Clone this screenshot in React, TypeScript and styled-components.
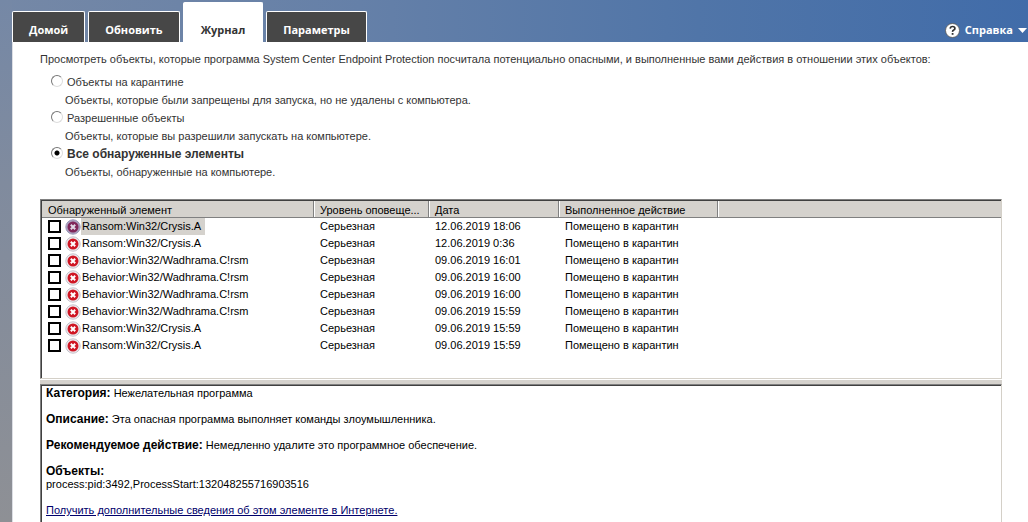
import React, { useState } from 'react';
import styled, { createGlobalStyle } from 'styled-components';

const GlobalStyle = createGlobalStyle`
  * { box-sizing: border-box; }
  html, body, #root { height: 100%; }
  body {
    margin: 0;
    overflow: hidden;
    font-family: 'Liberation Sans', Arial, sans-serif;
    font-size: 11px;
    line-height: 13px;
    color: #000;
  }
`;

const Window = styled.div`
  display: flex;
  flex-direction: column;
  height: 100%;
  padding-left: 12px;
  background:
    linear-gradient(180deg, #7588a6 0, #808b9e 35%, #8e9095 100%) 0 0 / 12px 100% no-repeat,
    linear-gradient(90deg, #7588a6 0, #6580a8 35%, #5075a8 68%, #416ca9 100%);
`;

const Header = styled.header`
  display: flex;
  align-items: flex-end;
  justify-content: space-between;
  flex: none;
  height: 42px;
`;

const Tabs = styled.nav`
  display: flex;
  align-items: flex-end;
  gap: 3px;
`;

const Tab = styled.button<{ $active?: boolean }>`
  height: ${p => (p.$active ? 40 : 31)}px;
  padding: ${p => (p.$active ? '15px 17px 0' : '6px 16px 0')};
  border: 1px solid #fff;
  border-bottom: 0;
  border-radius: 2px 2px 0 0;
  background: ${p => (p.$active ? '#fff' : '#474747')};
  color: ${p => (p.$active ? '#333' : '#fff')};
  font: bold 11px/14px 'Open Sans', sans-serif;
`;

const HelpButton = styled.button`
  display: flex;
  align-items: center;
  gap: 5px;
  height: 24px;
  padding: 0 1px 0 0;
  border: 0;
  background: none;
  color: #fff;
  font: bold 11px/14px 'Open Sans', sans-serif;
`;

const Page = styled.main`
  display: flex;
  flex-direction: column;
  flex: 1;
  min-height: 0;
  padding: 11px 26px 0 27px;
  border-left: 1px solid #dcdee4;
  background: #fff;
`;

const Intro = styled.p`
  margin: 0 0 9px;
  color: #333;
  white-space: nowrap;
`;

const Filters = styled.fieldset`
  margin: 0 0 16px;
  padding: 0 0 0 11px;
  border: 0;
  color: #333;
  line-height: 15px;
`;

const Choice = styled.label<{ $on: boolean }>`
  display: flex;
  gap: 4px;
  height: 18px;
  font-size: ${p => (p.$on ? 12 : 11)}px;
  font-weight: ${p => (p.$on ? 'bold' : 'normal')};
`;

const Radio = styled.input`
  appearance: none;
  width: 12px;
  height: 12px;
  margin: 0;
  border: 1px solid;
  border-color: #777 #ddd #ddd #777;
  border-radius: 50%;
  background: #fff;
  &:checked { background: radial-gradient(circle, #000 0 2px, #fff 3px); }
`;

const Hint = styled.p`
  height: 18px;
  margin: 0;
  padding-left: 14px;
`;

const Pane = styled.section`
  padding: 1px 0 0 1px;
  border: 1px solid #d4d0c8;
  border-top-color: #808080;
  border-left-color: #808080;
  box-shadow: inset 1px 1px #404040;
`;

const ListPane = styled(Pane)`
  flex: none;
  height: 180px;
`;

const Table = styled.table`
  width: 100%;
  border-collapse: separate;
  border-spacing: 0;
  table-layout: fixed;
`;

const HeadCell = styled.th`
  height: 17px;
  padding: 3px 5px 0 6px;
  border-right: 1px solid #808080;
  border-bottom: 1px solid #808080;
  background: #d5d2cd;
  font-weight: normal;
  line-height: 13px;
  text-align: left;
  white-space: nowrap;
  box-shadow: inset 1px 0 #fff;
  &:first-child { box-shadow: none; }
  &:last-child { border-right: 0; }
`;

const Cell = styled.td`
  height: 17px;
  padding: 0 6px;
  white-space: nowrap;
`;

const Item = styled.label`
  display: flex;
  align-items: center;
  height: 17px;
`;

const Check = styled.input`
  appearance: none;
  width: 13px;
  height: 13px;
  margin: 0 4px 0 0;
  border: 2px solid #000;
  background: #fff;
  &:checked { background: #000; }
`;

const Name = styled.span<{ $selected: boolean }>`
  padding: 2px 4px 2px 1px;
  background: ${p => (p.$selected ? '#d5d2cd' : 'transparent')};
`;

const Splitter = styled.div`
  flex: none;
  height: 4px;
  margin-top: 1px;
  background: #d5d2cd;
`;

const Details = styled(Pane)`
  flex: 1;
  min-height: 0;
  padding: 2px 5px;
  border-bottom: 0;
`;

const Paragraph = styled.p`
  margin: 0 0 13px;
`;

const Term = styled.b`
  font-size: 12px;
`;

const Link = styled.a`
  color: #00006b;
  text-decoration: underline;
`;

const ThreatIcon = ({ selected }: { selected: boolean }) => (
  <svg width="16" height="16" viewBox="0 0 16 16" aria-hidden="true">
    <circle cx="8" cy="8" r="7.2" fill={selected ? '#aaa0bd' : '#eeecef'} stroke={selected ? '#9c96b8' : '#c6c2cc'} />
    <circle cx="8" cy="8" r="5.5" fill={selected ? '#80265a' : '#cf1624'} />
    <path d="M5.8 5.8l4.4 4.4M10.2 5.8l-4.4 4.4" stroke={selected ? '#e0d8e6' : '#fff'} strokeWidth="2" />
  </svg>
);

const tabs = ['Домой', 'Обновить', 'Журнал', 'Параметры'];

const filters = [
  ['Объекты на карантине', 'Объекты, которые были запрещены для запуска, но не удалены с компьютера.'],
  ['Разрешенные объекты', 'Объекты, которые вы разрешили запускать на компьютере.'],
  ['Все обнаруженные элементы', 'Объекты, обнаруженные на компьютере.'],
];

const threats = [
  ['Ransom:Win32/Crysis.A', '12.06.2019 18:06'],
  ['Ransom:Win32/Crysis.A', '12.06.2019 0:36'],
  ['Behavior:Win32/Wadhrama.C!rsm', '09.06.2019 16:01'],
  ['Behavior:Win32/Wadhrama.C!rsm', '09.06.2019 16:00'],
  ['Behavior:Win32/Wadhrama.C!rsm', '09.06.2019 16:00'],
  ['Behavior:Win32/Wadhrama.C!rsm', '09.06.2019 15:59'],
  ['Ransom:Win32/Crysis.A', '09.06.2019 15:59'],
  ['Ransom:Win32/Crysis.A', '09.06.2019 15:59'],
];

export default function App() {
  const [tab, setTab] = useState(2);
  const [filter, setFilter] = useState(2);

  return (
    <Window>
      <GlobalStyle />
      <Header>
        <Tabs>
          {tabs.map((label, i) => (
            <Tab key={label} type="button" $active={i === tab} onClick={() => setTab(i)}>{label}</Tab>
          ))}
        </Tabs>
        <HelpButton type="button">
          <svg width="15" height="15" viewBox="0 0 15 15" aria-hidden="true">
            <circle cx="7.5" cy="7.5" r="7" fill="#fff" stroke="#55534f" strokeWidth="0.8" />
            <path d="M5.2 5.6Q5.3 3.5 7.6 3.5T9.9 5.4Q9.9 6.5 8.7 7.1T7.6 8.9" fill="none" stroke="#333" strokeWidth="1.7" />
            <path d="M6.7 10h1.8v1.8H6.7z" fill="#333" />
          </svg>
          Справка
          <svg width="9" height="5" viewBox="0 0 9 5" aria-hidden="true"><path d="M0 0h9L4.5 5z" fill="#fff" /></svg>
        </HelpButton>
      </Header>
      <Page>
        <Intro>Просмотреть объекты, которые программа System Center Endpoint Protection посчитала потенциально опасными, и выполненные вами действия в отношении этих объектов:</Intro>
        <Filters>
          {filters.map(([label, hint], i) => (
            <React.Fragment key={label}>
              <Choice $on={i === filter}>
                <Radio type="radio" name="filter" checked={i === filter} onChange={() => setFilter(i)} />
                {label}
              </Choice>
              <Hint>{hint}</Hint>
            </React.Fragment>
          ))}
        </Filters>
        <ListPane>
          <Table>
            <colgroup>
              <col width="272" /><col width="115" /><col width="130" /><col width="159" /><col />
            </colgroup>
            <thead>
              <tr>
                <HeadCell>Обнаруженный элемент</HeadCell>
                <HeadCell>Уровень оповеще...</HeadCell>
                <HeadCell>Дата</HeadCell>
                <HeadCell>Выполненное действие</HeadCell>
                <HeadCell />
              </tr>
            </thead>
            <tbody>
              {threats.map(([name, date], i) => (
                <tr key={i}>
                  <Cell>
                    <Item>
                      <Check type="checkbox" />
                      <ThreatIcon selected={i === 0} />
                      <Name $selected={i === 0}>{name}</Name>
                    </Item>
                  </Cell>
                  <Cell>Серьезная</Cell>
                  <Cell>{date}</Cell>
                  <Cell>Помещено в карантин</Cell>
                  <Cell />
                </tr>
              ))}
            </tbody>
          </Table>
        </ListPane>
        <Splitter />
        <Details>
          <Paragraph><Term>Категория:</Term> Нежелательная программа</Paragraph>
          <Paragraph><Term>Описание:</Term> Эта опасная программа выполняет команды злоумышленника.</Paragraph>
          <Paragraph><Term>Рекомендуемое действие:</Term> Немедленно удалите это программное обеспечение.</Paragraph>
          <Paragraph><Term>Объекты:</Term><br />process:pid:3492,ProcessStart:132048255716903516</Paragraph>
          <Link href="#details">Получить дополнительные сведения об этом элементе в Интернете.</Link>
        </Details>
      </Page>
    </Window>
  );
}
